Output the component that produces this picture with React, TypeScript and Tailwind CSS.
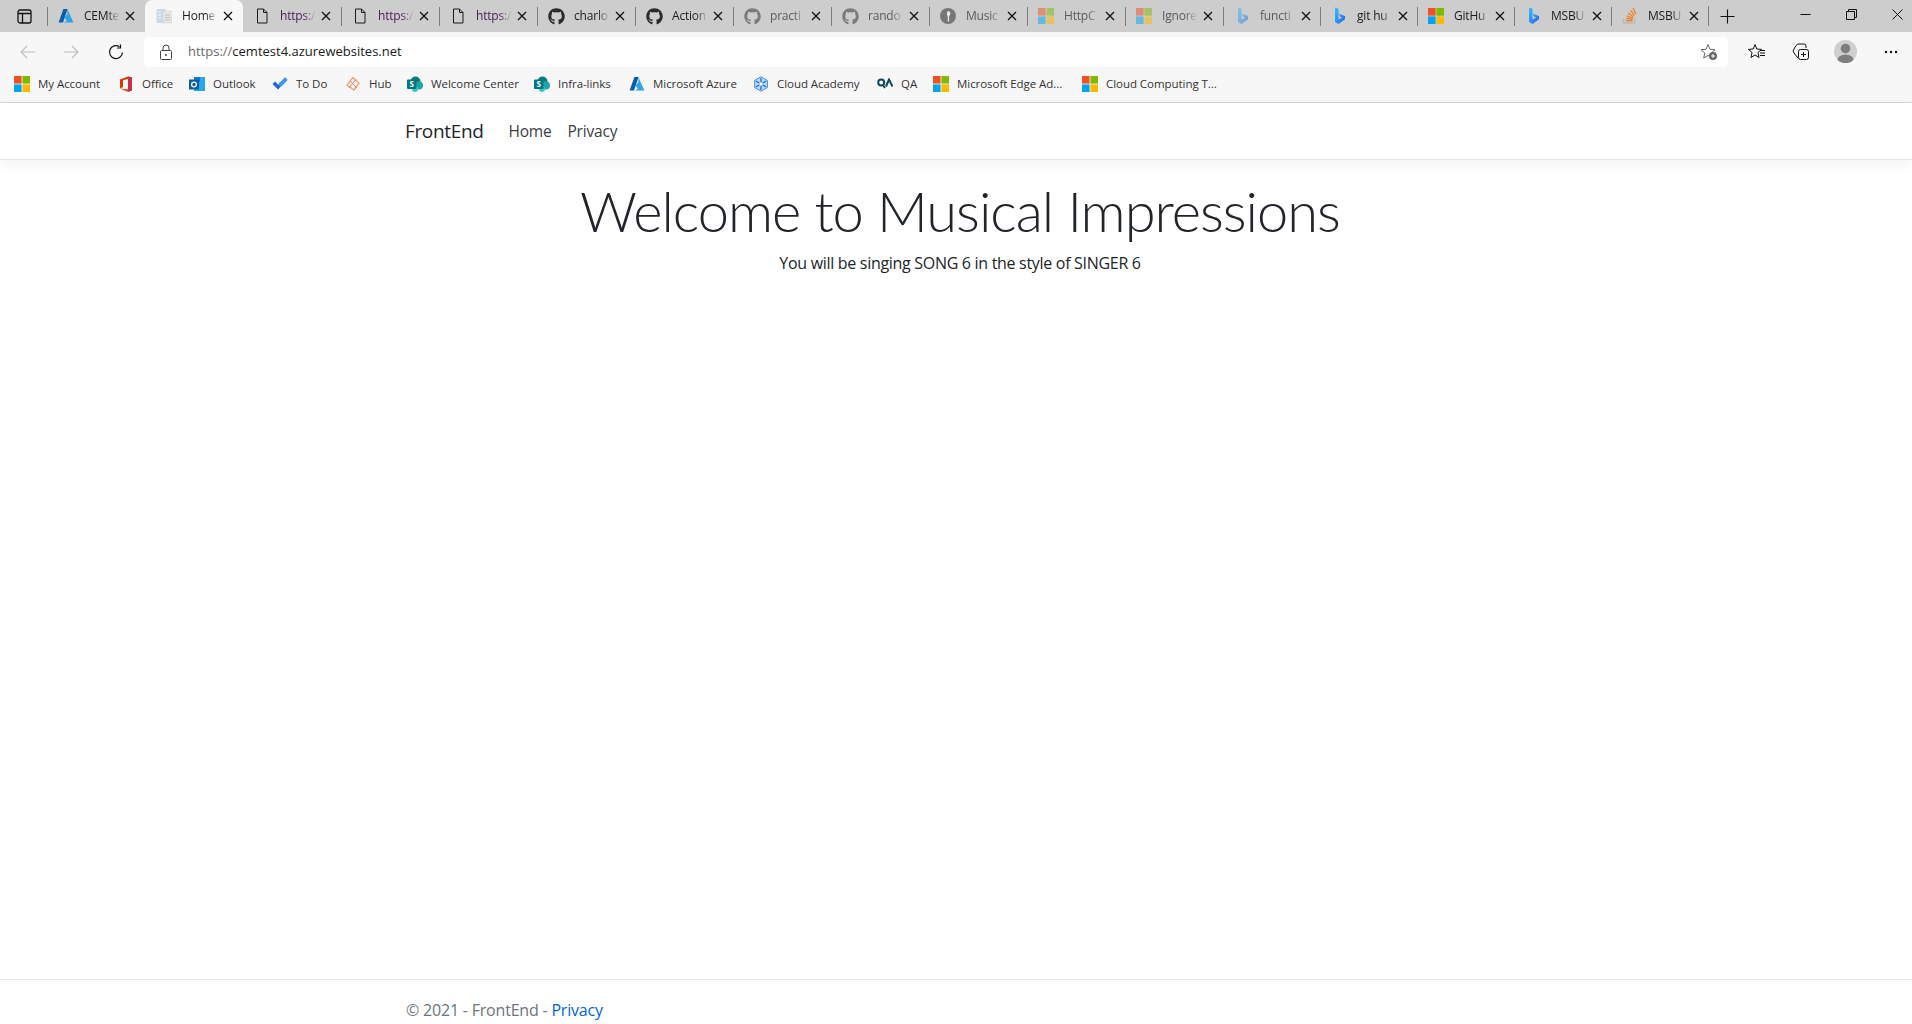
import React from "react";
import { FaGithub } from "react-icons/fa";

const sans = "font-['Open_Sans','Noto_Sans',sans-serif]";

const MsLogo = ({ s = 16 }: { s?: number }) => (
  <svg width={s} height={s} viewBox="0 0 16 16" className="shrink-0">
    <rect x="0" y="0" width="7.6" height="7.6" fill="#f25022" />
    <rect x="8.4" y="0" width="7.6" height="7.6" fill="#7fba00" />
    <rect x="0" y="8.4" width="7.6" height="7.6" fill="#00a4ef" />
    <rect x="8.4" y="8.4" width="7.6" height="7.6" fill="#ffb900" />
  </svg>
);
const Azure = () => (
  <svg width="16" height="16" viewBox="0 0 16 16" className="shrink-0">
    <path d="M5.4 1 H9.6 L5 14.6 H0.6 Z" fill="#0a5ea8" />
    <path d="M9.4 1 L15.4 14.6 H5.6 L8.9 13 L6.6 9.4 L9.4 6 Z" fill="#2fa4e7" />
  </svg>
);
const PageDoc = () => (
  <svg width="16" height="16" viewBox="0 0 16 16" fill="none" stroke="#1a1a1a" strokeWidth="1" className="shrink-0">
    <path d="M3.5 1 H9.5 L13 4.5 V15 H3.5 Z M9.5 1 V4.5 H13" />
  </svg>
);
const HomeFav = () => (
  <svg width="16" height="16" viewBox="0 0 16 16" className="shrink-0">
    <rect x="0.5" y="1" width="9" height="14" fill="#c9d8ea" />
    <rect x="7" y="3" width="8.5" height="12" fill="#e6e6e6" stroke="#cfcfcf" strokeWidth="0.5" />
    <path d="M9 7 H14 M9 9.5 H14 M9 12 H14" stroke="#b9b9b9" strokeWidth="0.8" />
    <path d="M2 4 H5 M2 7 H5 M2 10 H5" stroke="#ffffff" strokeWidth="0.8" />
  </svg>
);
const Git = () => <FaGithub size={17} color="#2b2b2b" className="shrink-0" />;
const Music = () => (
  <svg width="16" height="16" viewBox="0 0 16 16" className="shrink-0">
    <circle cx="8" cy="8" r="8" fill="#222" />
    <ellipse cx="8.6" cy="5.5" rx="1.8" ry="2.6" fill="#fff" />
    <rect x="7.7" y="7" width="1.4" height="6.5" fill="#fff" />
  </svg>
);
const Bing = () => (
  <svg width="16" height="18" viewBox="0 0 16 18" className="shrink-0">
    <defs>
      <linearGradient id="bg1" x1="0" y1="0" x2="1" y2="1">
        <stop offset="0" stopColor="#37bdff" />
        <stop offset="1" stopColor="#2563eb" />
      </linearGradient>
    </defs>
    <path d="M4 0.5 L7.5 1.8 V12.6 L11 10.6 L9 9.6 L7.9 6.8 L14 9 V12.2 L7.6 17 L4 15 Z" fill="url(#bg1)" />
  </svg>
);
const SO = () => (
  <svg width="16" height="18" viewBox="0 0 16 18" className="shrink-0" fill="none">
    <path d="M1.5 11 V16 H12.5 V11" stroke="#bcbbbb" strokeWidth="1.4" />
    <path d="M4 13.8 H10.5" stroke="#f48024" strokeWidth="1.4" />
    <path d="M4.2 11.4 L10.6 12.6 M4.8 8.8 L10.8 11.4 M6.2 6 L11.4 10 M8.6 3.4 L12.4 8.6 M11.2 1 L13.8 7" stroke="#f48024" strokeWidth="1.4" />
  </svg>
);
const Close = () => (
  <svg width="10" height="10" viewBox="0 0 10 10" stroke="#111" strokeWidth="1.3" className="shrink-0">
    <path d="M1 1 L9 9 M9 1 L1 9" />
  </svg>
);

type T = { t: string; i: React.ReactNode; dim?: boolean; c?: string };
const tabs: T[] = [
  { t: "CEMte", i: <Azure /> },
  { t: "Home", i: <HomeFav /> },
  { t: "https:/", i: <PageDoc />, c: "text-[#4b1a55]" },
  { t: "https:/", i: <PageDoc />, c: "text-[#4b1a55]" },
  { t: "https:/", i: <PageDoc />, c: "text-[#4b1a55]" },
  { t: "charlo", i: <Git /> },
  { t: "Action", i: <Git /> },
  { t: "practi", i: <Git />, dim: true },
  { t: "rando", i: <Git />, dim: true },
  { t: "Music", i: <Music />, dim: true },
  { t: "HttpC", i: <MsLogo />, dim: true },
  { t: "Ignore", i: <MsLogo />, dim: true },
  { t: "functi", i: <Bing />, dim: true },
  { t: "git hu", i: <Bing /> },
  { t: "GitHu", i: <MsLogo /> },
  { t: "MSBU", i: <Bing /> },
  { t: "MSBU", i: <SO /> },
];

const Tab = ({ tab, idx }: { tab: T; idx: number }) => {
  const active = idx === 1;
  const hideSep = idx === 1 || idx === 2;
  return (
    <div className={`flex h-full shrink-0 items-center ${idx < 12 ? "w-[98px]" : "w-[97px]"} ${active ? "rounded-t-[7px] bg-[#f7f7f7]" : ""}`}>
      <span className={`h-[19px] w-px shrink-0 ${hideSep ? "bg-transparent" : "bg-[#7d7d7d]"}`} />
      <span className={`ml-[10px] flex w-4 items-center justify-center ${tab.dim ? "opacity-50" : ""}`}>{tab.i}</span>
      <span
        className={`ml-[10px] w-[36px] whitespace-nowrap text-[12px] tracking-[-0.2px] [mask-image:linear-gradient(to_right,black_65%,transparent)] ${tab.dim ? "text-[#5a5a5a]" : tab.c ?? "text-[#1c1c1c]"}`}
      >
        {tab.t}
      </span>
      <span className="ml-[5px] flex"><Close /></span>
    </div>
  );
};

const Icon = ({ children, w = 16, h = 16, cls = "" }: { children: React.ReactNode; w?: number; h?: number; cls?: string }) => (
  <svg width={w} height={h} viewBox={`0 0 ${w} ${h}`} fill="none" className={`shrink-0 ${cls}`}>
    {children}
  </svg>
);

const Office = () => (
  <svg width="14" height="16" viewBox="0 0 14 16" className="shrink-0">
    <path d="M1 3.4 L9 0.4 L13 1.6 V14.4 L9 15.8 L1 12.6 L9 13.6 V3 L4 4.2 V11 L1 12.6 Z" fill="#d83b01" />
    <path d="M9 0.4 L13 1.6 V14.4 L9 15.8 Z" fill="#c4314b" />
  </svg>
);
const Outlook = () => (
  <svg width="16" height="16" viewBox="0 0 16 16" className="shrink-0">
    <rect x="5" y="1" width="11" height="14" fill="#28a8ea" />
    <rect x="5" y="1" width="6" height="5" fill="#0f78d4" />
    <rect x="0" y="3.5" width="10" height="10" fill="#0a5ea8" />
    <circle cx="5" cy="8.5" r="2.4" fill="none" stroke="#fff" strokeWidth="1.3" />
  </svg>
);
const ToDo = () => (
  <svg width="16" height="13" viewBox="0 0 16 13" className="shrink-0">
    <path d="M0.5 7 L3 4.6 L6 7.6 L13 0.5 L15.5 3 L6 12.5 Z" fill="#2564cf" />
    <path d="M13 0.5 L15.5 3 L8.5 10 L6 7.6 Z" fill="#3f9bf0" />
  </svg>
);
const Hub = () => (
  <svg width="16" height="16" viewBox="0 0 16 16" fill="none" className="shrink-0">
    <path d="M8 1.5 L14 7 L9 14 L2 9 Z" stroke="#f4a06c" strokeWidth="1.3" />
    <path d="M5 5 L12 12 M11 3 L4 12" stroke="#f2796b" strokeWidth="1" />
  </svg>
);
const SP = () => (
  <svg width="16" height="16" viewBox="0 0 16 16" className="shrink-0">
    <circle cx="8.5" cy="5.5" r="5" fill="#0e7a7c" />
    <circle cx="12" cy="9.5" r="4" fill="#1ba5a8" />
    <circle cx="8" cy="13" r="3" fill="#37c6d0" />
    <rect x="0" y="3.5" width="9.5" height="9.5" rx="1" fill="#03787c" />
    <text x="4.7" y="11" textAnchor="middle" fontSize="8" fontWeight="700" fill="#fff" fontFamily="Open Sans">S</text>
  </svg>
);
const CloudA = () => (
  <svg width="16" height="16" viewBox="0 0 16 16" fill="none" className="shrink-0">
    <path d="M8 0.8 L14.4 4.4 V11.6 L8 15.2 L1.6 11.6 V4.4 Z" fill="#bcd9f7" stroke="#4a90e2" strokeWidth="1" />
    <path d="M8 2 V14 M2.8 5 L13.2 11 M13.2 5 L2.8 11" stroke="#1e6fd9" strokeWidth="1.3" />
    <circle cx="8" cy="8" r="1.8" fill="#fff" />
  </svg>
);
const QA = () => (
  <svg width="16" height="11" viewBox="0 0 16 11" fill="none" className="shrink-0">
    <circle cx="4.2" cy="4.6" r="3" stroke="#0c4a5c" strokeWidth="2" />
    <path d="M5.5 6.5 L8 10" stroke="#0c4a5c" strokeWidth="2" />
    <path d="M9 8.5 L12 1.5 L15.5 8.5" stroke="#0c4a5c" strokeWidth="2" />
  </svg>
);

const bookmarks = [
  { t: "My Account", i: <MsLogo />, w: "w-[104px]" },
  { t: "Office", i: <Office />, w: "w-[71px]" },
  { t: "Outlook", i: <Outlook />, w: "w-[83px]" },
  { t: "To Do", i: <ToDo />, w: "w-[73px]" },
  { t: "Hub", i: <Hub />, w: "w-[62px]" },
  { t: "Welcome Center", i: <SP />, w: "w-[127px]" },
  { t: "Infra-links", i: <SP />, w: "w-[95px]" },
  { t: "Microsoft Azure", i: <Azure />, w: "w-[124px]" },
  { t: "Cloud Academy", i: <CloudA />, w: "w-[124px]" },
  { t: "QA", i: <QA />, w: "w-[56px]" },
  { t: "Microsoft Edge Ad...", i: <MsLogo />, w: "w-[149px]" },
  { t: "Cloud Computing T...", i: <MsLogo />, w: "w-[150px]" },
];

export default function App() {
  return (
    <div className={`flex h-screen w-full flex-col overflow-hidden bg-white ${sans}`}>
      {/* tab strip */}
      <div className="flex h-[32px] shrink-0 bg-[#cdcdcd]">
        <div className="flex w-[47px] shrink-0 items-center pl-[17px]">
          <Icon w={15} h={15}>
            <rect x="1" y="1" width="13" height="13" rx="2" stroke="#111" strokeWidth="1.3" />
            <path d="M1 4.5 H14 M5.5 4.5 V14" stroke="#111" strokeWidth="1.3" />
          </Icon>
        </div>
        {tabs.map((t, i) => (
          <Tab key={i} tab={t} idx={i} />
        ))}
        <span className="mt-[6px] h-[20px] w-px bg-[#7d7d7d]" />
        <div className="ml-[11px] flex items-center">
          <Icon w={15} h={15}>
            <path d="M7.5 0.5 V14.5 M0.5 7.5 H14.5" stroke="#111" strokeWidth="1.1" />
          </Icon>
        </div>
        <div className="ml-auto flex h-full">
          <div className="flex w-[46px] items-center justify-center pb-[3px]">
            <Icon w={11} h={11}><path d="M0.5 5.5 H10.5" stroke="#111" /></Icon>
          </div>
          <div className="mr-[8px] flex w-[46px] items-center justify-center pb-[3px]">
            <Icon w={11} h={11}>
              <path d="M0.5 2.5 H8.5 V10.5 H0.5 Z M2.5 2.5 V0.5 H10.5 V8.5 H8.5" stroke="#111" />
            </Icon>
          </div>
          <div className="flex w-[30px] items-center justify-center pb-[3px]">
            <Icon w={11} h={11}><path d="M0.5 0.5 L10.5 10.5 M10.5 0.5 L0.5 10.5" stroke="#111" /></Icon>
          </div>
        </div>
      </div>

      {/* toolbar */}
      <div className="flex h-[38px] shrink-0 items-center bg-[#f7f7f7] pt-[1px]">
        <div className="flex w-[144px] shrink-0 items-center pl-[20px]">
          <Icon>
            <path d="M15 8 H1 M7 2 L1 8 L7 14" stroke="#bdbdbd" strokeWidth="1.1" />
          </Icon>
          <Icon cls="ml-[27px]">
            <path d="M1 8 H15 M9 2 L15 8 L9 14" stroke="#bdbdbd" strokeWidth="1.1" />
          </Icon>
          <Icon cls="ml-[29px]">
            <path d="M14.5 8.5 A6.5 6.5 0 1 1 11.5 2.6" stroke="#111" strokeWidth="1.2" />
            <path d="M12.5 0.5 V4 H9" stroke="#111" strokeWidth="1.2" />
          </Icon>
        </div>
        <div className="flex h-[30px] flex-1 items-center rounded-[4px] bg-white pl-[16px] pr-[10px] shadow-[0_0_1px_rgba(0,0,0,0.08)]">
          <Icon w={12} h={16}>
            <path d="M3 7 V4 A3 3 0 0 1 9 4 V7" stroke="#444" strokeWidth="1" />
            <rect x="0.5" y="6.5" width="11" height="9" rx="1" stroke="#444" />
            <circle cx="6" cy="11" r="1" fill="#444" />
          </Icon>
          <span className="ml-[16px] text-[13px] text-[#202020]">
            <span className="text-[#6b6b6b]">https://</span>cemtest4.azurewebsites.net
          </span>
          <Icon w={18} h={18} cls="ml-auto">
            <path d="M8 1.5 L10 6.3 L15 6.7 L11.2 10 L12.3 15 L8 12.4 L3.7 15 L4.8 10 L1 6.7 L6 6.3 Z" stroke="#666" />
            <circle cx="13" cy="13" r="4" fill="#666" />
            <path d="M11 13 H15 M13 11 V15" stroke="#fff" />
          </Icon>
        </div>
        <div className="flex w-[184px] shrink-0 items-center pl-[20px]">
          <Icon w={18} h={18}>
            <path d="M7 1.5 L8.8 6 L13.5 6.4 L10 9.5 L11 14.5 L7 12 L3 14.5 L4 9.5 L0.5 6.4 L5.2 6 Z" stroke="#111" />
            <path d="M12 7.5 H17 M12 10 H17 M12 12.5 H17" stroke="#111" />
          </Icon>
          <Icon w={18} h={18} cls="ml-[26px]">
            <path d="M6 15 L2 10 A3 3 0 0 1 2 6 L4 2.5 Q5 1 7 1 H12 Q14 1 14 3 V5" stroke="#111" />
            <rect x="6.5" y="6.5" width="10" height="10" rx="2" fill="#f7f7f7" stroke="#111" />
            <path d="M9 11.5 H14 M11.5 9 V14" stroke="#111" />
          </Icon>
          <svg width="23" height="23" viewBox="0 0 23 23" className="ml-[24px] shrink-0">
            <clipPath id="pc"><circle cx="11.5" cy="11.5" r="11.5" /></clipPath>
            <circle cx="11.5" cy="11.5" r="11.5" fill="#cfcfcf" />
            <g clipPath="url(#pc)">
              <circle cx="11.5" cy="8.5" r="4.8" fill="#7f7f7f" />
              <ellipse cx="11.5" cy="20" rx="8" ry="5.5" fill="#7f7f7f" />
            </g>
          </svg>
          <Icon w={14} h={4} cls="ml-[27px]">
            <circle cx="2" cy="2" r="1.2" fill="#111" />
            <circle cx="7" cy="2" r="1.2" fill="#111" />
            <circle cx="12" cy="2" r="1.2" fill="#111" />
          </Icon>
        </div>
      </div>

      {/* bookmarks */}
      <div className="flex h-[33px] shrink-0 items-center border-b border-b-[#d6d6d6] bg-[#f7f7f7] pl-[14px] pb-[5px]">
        {bookmarks.map((b) => (
          <div key={b.t} className={`flex shrink-0 items-center ${b.w}`}>
            <span className="flex w-4 shrink-0 items-center justify-center">{b.i}</span>
            <span className="ml-[8px] whitespace-nowrap text-[11.5px] tracking-[-0.05px] text-[#333333]">{b.t}</span>
          </div>
        ))}
      </div>

      {/* app navbar */}
      <nav className="relative z-10 flex h-[57px] shrink-0 items-center border-b border-b-[#e5e5e5] bg-white pl-[405px] pt-[1px] shadow-[0_4px_14px_rgba(0,0,0,0.05)]">
        <span className="text-[19px] tracking-[-0.35px] text-[#212529]">FrontEnd</span>
        <span className="ml-[25px] text-[15.5px] tracking-[-0.2px] text-[#3a4046]">Home</span>
        <span className="ml-[16px] text-[15.5px] tracking-[-0.2px] text-[#3a4046]">Privacy</span>
      </nav>

      {/* main */}
      <main className="flex flex-1 flex-col items-center pl-[8px] text-[#212529]">
        <h1 className="mt-[17px] font-['Lato',sans-serif] text-[56px] font-light leading-[67px] tracking-[-1px]">Welcome to Musical Impressions</h1>
        <p className="mt-[7px] text-[16px] leading-[24px] tracking-[-0.3px]">You will be singing SONG 6 in the style of SINGER 6</p>
      </main>

      {/* footer */}
      <footer className="flex h-[45px] shrink-0 items-center border-t border-t-[#e5e5e5] pl-[406px] pt-[16px] text-[16px] tracking-[-0.2px] text-[#6c757d]">
        <span>
          © 2021 - FrontEnd - <span className="text-[#0366d6]">Privacy</span>
        </span>
      </footer>
    </div>
  );
}
